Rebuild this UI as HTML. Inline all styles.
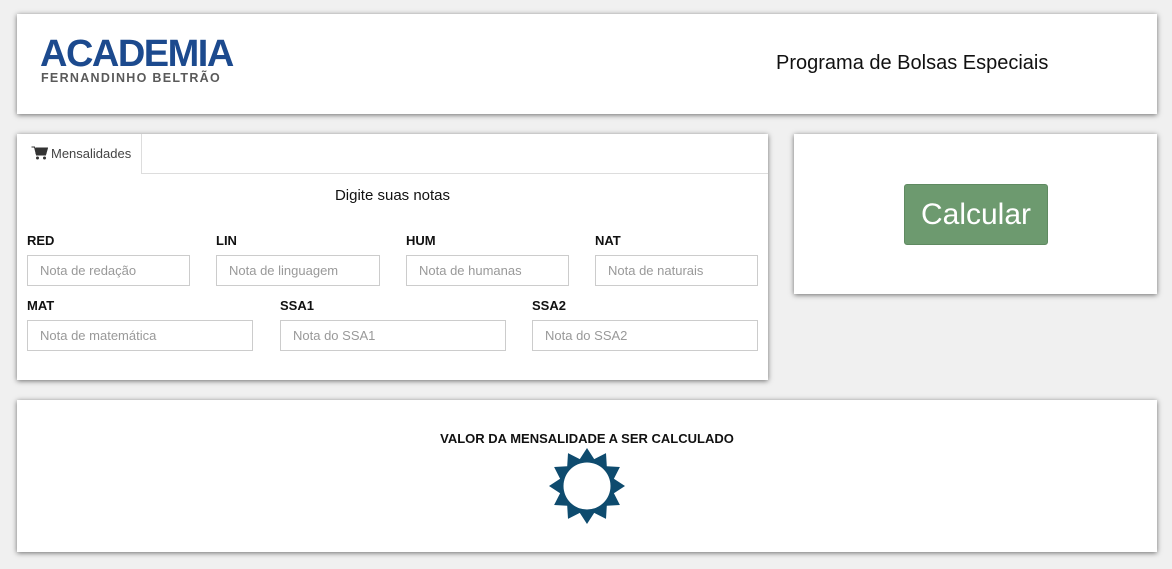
<!DOCTYPE html>
<html><head><meta charset="utf-8"><style>
body{margin:0;width:1172px;height:569px;background:#f0f0f0;font-family:"Liberation Sans",Arial,sans-serif;position:relative;overflow:hidden}
.p{position:absolute;background:#fff;box-shadow:0 1px 5px rgba(0,0,0,.55)}
.lbl{position:absolute;font-weight:bold;font-size:13px;color:#111}
.in{position:absolute;height:31px;border:1px solid #ccc;box-sizing:border-box;font-size:13px;color:#999;padding:8px 12px;line-height:13px}
</style></head><body>
<div class="p" style="left:17px;top:14px;width:1140px;height:100px">
 <div style="position:absolute;left:23px;top:24px;font-weight:bold;font-size:38px;color:#1c4a8e;letter-spacing:-1.5px;line-height:32px">ACADEMIA</div>
 <div style="position:absolute;left:24px;top:57px;font-size:12.5px;color:#5a5a5a;letter-spacing:1.3px;font-weight:bold">FERNANDINHO BELTRÃO</div>
 <div style="position:absolute;left:759px;top:38px;font-size:20px;color:#111">Programa de Bolsas Especiais</div>
</div>
<div class="p" style="left:17px;top:134px;width:751px;height:246px">
 <div style="position:absolute;left:0;top:39px;width:751px;border-top:1px solid #ddd"></div>
 <div style="position:absolute;left:0;top:0;width:125px;height:40px;background:#fff;border-right:1px solid #ddd;box-sizing:border-box;font-size:13px;color:#444;padding:12px 0 0 14px">
  <svg width="17" height="14" viewBox="0 0 16 14" style="vertical-align:-2px;margin-right:3px"><path d="M0 1h3l2 8h9l2-7H4" fill="#333" stroke="#333" stroke-width="1"/><rect x="4" y="2" width="11" height="6" fill="#333"/><circle cx="6" cy="12" r="1.5" fill="#333"/><circle cx="13" cy="12" r="1.5" fill="#333"/></svg>Mensalidades</div>
 <div style="position:absolute;left:0;width:751px;top:53px;text-align:center;font-size:15px;color:#111">Digite suas notas</div>
 <div class="lbl" style="left:10px;top:99px">RED</div><div class="in" style="left:10px;top:121px;width:163px">Nota de redação</div>
 <div class="lbl" style="left:199px;top:99px">LIN</div><div class="in" style="left:199px;top:121px;width:164px">Nota de linguagem</div>
 <div class="lbl" style="left:389px;top:99px">HUM</div><div class="in" style="left:389px;top:121px;width:163px">Nota de humanas</div>
 <div class="lbl" style="left:578px;top:99px">NAT</div><div class="in" style="left:578px;top:121px;width:163px">Nota de naturais</div>
 <div class="lbl" style="left:10px;top:164px">MAT</div><div class="in" style="left:10px;top:186px;width:226px">Nota de matemática</div>
 <div class="lbl" style="left:263px;top:164px">SSA1</div><div class="in" style="left:263px;top:186px;width:226px">Nota do SSA1</div>
 <div class="lbl" style="left:515px;top:164px">SSA2</div><div class="in" style="left:515px;top:186px;width:226px">Nota do SSA2</div>
</div>
<div class="p" style="left:794px;top:134px;width:363px;height:160px">
 <div style="position:absolute;left:110px;top:50px;width:144px;height:61px;background:#6d9a6f;border-radius:3px;border:1px solid #5f8a61;box-sizing:border-box;color:#fff;font-size:30px;text-align:center;line-height:59px">Calcular</div>
</div>
<div class="p" style="left:17px;top:400px;width:1140px;height:152px">
 <div style="position:absolute;left:0;width:1140px;top:31px;text-align:center;font-weight:bold;font-size:13px;color:#111">VALOR DA MENSALIDADE A SER CALCULADO</div>
 <svg style="position:absolute;left:530px;top:46px" width="80" height="80" viewBox="-40 -40 80 80"><polygon fill="#0e4b6e" points="0,-38 7.2,-26.9 19,-32.9 19.8,-19.8 32.9,-19 26.9,-7.2 38,0 26.9,7.2 32.9,19 19.8,19.8 19,32.9 7.2,26.9 0,38 -7.2,26.9 -19,32.9 -19.8,19.8 -32.9,19 -26.9,7.2 -38,0 -26.9,-7.2 -32.9,-19 -19.8,-19.8 -19,-32.9 -7.2,-26.9"/><circle r="23.5" fill="#fff"/></svg>
</div>
</body></html>
